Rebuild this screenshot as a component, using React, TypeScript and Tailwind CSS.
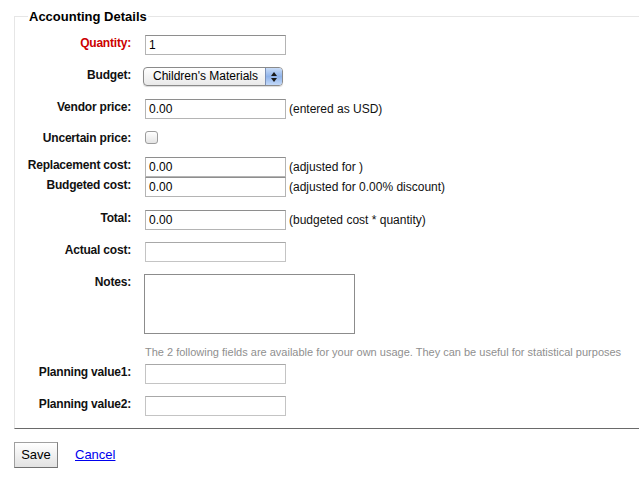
import React from 'react';

const font = { fontFamily: '"Liberation Sans", Arial, Helvetica, sans-serif' };

function Label({ children, red }: { children: React.ReactNode; red?: boolean }) {
  return (
    <label
      className={`w-[117px] shrink-0 pr-[1px] text-right text-[12px] font-bold leading-[16px] tracking-[-0.2px] ${
        red ? 'text-[#cc0000]' : 'text-[#111]'
      }`}
    >
      {children}
    </label>
  );
}

function TextInput({ value, light }: { value?: string; light?: boolean }) {
  return (
    <div
      className={`h-[20px] w-[141px] shrink-0 border bg-white px-[3px] text-[12px] leading-[18px] text-black ${
        light ? 'border-[#c4c4c4] border-t-[#a8a8a8]' : 'border-[#b4b4b4] border-t-[#8e8e8e]'
      }`}
    >
      {value}
    </div>
  );
}

function Note({ children }: { children: React.ReactNode }) {
  return <span className="ml-[3px] text-[12px] leading-[20px] text-[#111]">{children}</span>;
}

function Row({ label, red, className, children }: { label: string; red?: boolean; className: string; children: React.ReactNode }) {
  return (
    <div className={`flex items-start ${className}`}>
      <Label red={red}>{label}</Label>
      <div className="ml-[13px] flex items-start">{children}</div>
    </div>
  );
}

export default function App() {
  return (
    <div className="h-[478px] w-[639px] overflow-hidden bg-white" style={font}>
      <fieldset className="ml-[14px] mt-[9px] border-t border-l border-b border-r-0 border-[#e6e6e6] border-b-[#6a6a6a] pb-[12px]">
        <legend className="ml-[13px] px-[1px] text-[13px] font-bold leading-[15px] text-black">
          Accounting Details
        </legend>

        <Row label="Quantity:" red className="mt-[11px]">
          <TextInput value="1" />
        </Row>

        <Row label="Budget:" className="mt-[12px]">
          <div className="-ml-[2px] flex h-[19px] w-[140px] items-stretch overflow-hidden rounded-[4px] border border-[#8a8a8a] bg-gradient-to-b from-white to-[#e9e9e9] shadow-[0_1px_1px_rgba(0,0,0,0.15)]">
            <span className="flex-1 pl-[9px] text-[12px] leading-[17px] text-black">Children's Materials</span>
            <span className="flex w-[17px] flex-col items-center justify-center gap-[2px] border-l border-[#7a8fb5] bg-gradient-to-b from-[#c9dcf7] via-[#8fb3ea] to-[#c2d8f8]">
              <svg width="6" height="4" viewBox="0 0 6 4"><path d="M3 0L6 4H0z" fill="#1a1a1a" /></svg>
              <svg width="6" height="4" viewBox="0 0 6 4"><path d="M0 0H6L3 4z" fill="#1a1a1a" /></svg>
            </span>
          </div>
        </Row>

        <Row label="Vendor price:" className="mt-[13px]">
          <TextInput value="0.00" />
          <Note>(entered as USD)</Note>
        </Row>

        <Row label="Uncertain price:" className="mt-[11px]">
          <div className="mt-[1px] h-[13px] w-[13px] rounded-[3px] border border-[#9c9c9c] bg-gradient-to-b from-white to-[#e4e4e4]" />
        </Row>

        <Row label="Replacement cost:" className="mt-[11px]">
          <TextInput value="0.00" />
          <Note>(adjusted for )</Note>
        </Row>

        <Row label="Budgeted cost:" className="mt-0">
          <TextInput value="0.00" />
          <Note>(adjusted for 0.00% discount)</Note>
        </Row>

        <Row label="Total:" className="mt-[13px]">
          <TextInput value="0.00" />
          <Note>(budgeted cost * quantity)</Note>
        </Row>

        <Row label="Actual cost:" className="mt-[12px]">
          <TextInput light />
        </Row>

        <Row label="Notes:" className="mt-[12px]">
          <div className="-ml-[1px] h-[60px] w-[211px] border border-[#8c8c8c] bg-white" />
        </Row>

        <p className="ml-[130px] mt-[11px] text-[11px] leading-[14px] text-[#8f8f8f]">
          The 2 following fields are available for your own usage. They can be useful for statistical purposes
        </p>

        <Row label="Planning value1:" className="mt-[5px]">
          <TextInput light />
        </Row>

        <Row label="Planning value2:" className="mt-[12px]">
          <TextInput light />
        </Row>
      </fieldset>

      <div className="ml-[14px] mt-[13px] flex items-center">
        <button className="h-[26px] w-[44px] border border-[#a0a0a0] border-b-[#707070] border-r-[#808080] bg-gradient-to-b from-white to-[#e2e2e2] text-[13px] leading-[24px] text-black">
          Save
        </button>
        <a href="#" className="ml-[17px] text-[13px] text-[#0000ee] underline">
          Cancel
        </a>
      </div>
    </div>
  );
}
